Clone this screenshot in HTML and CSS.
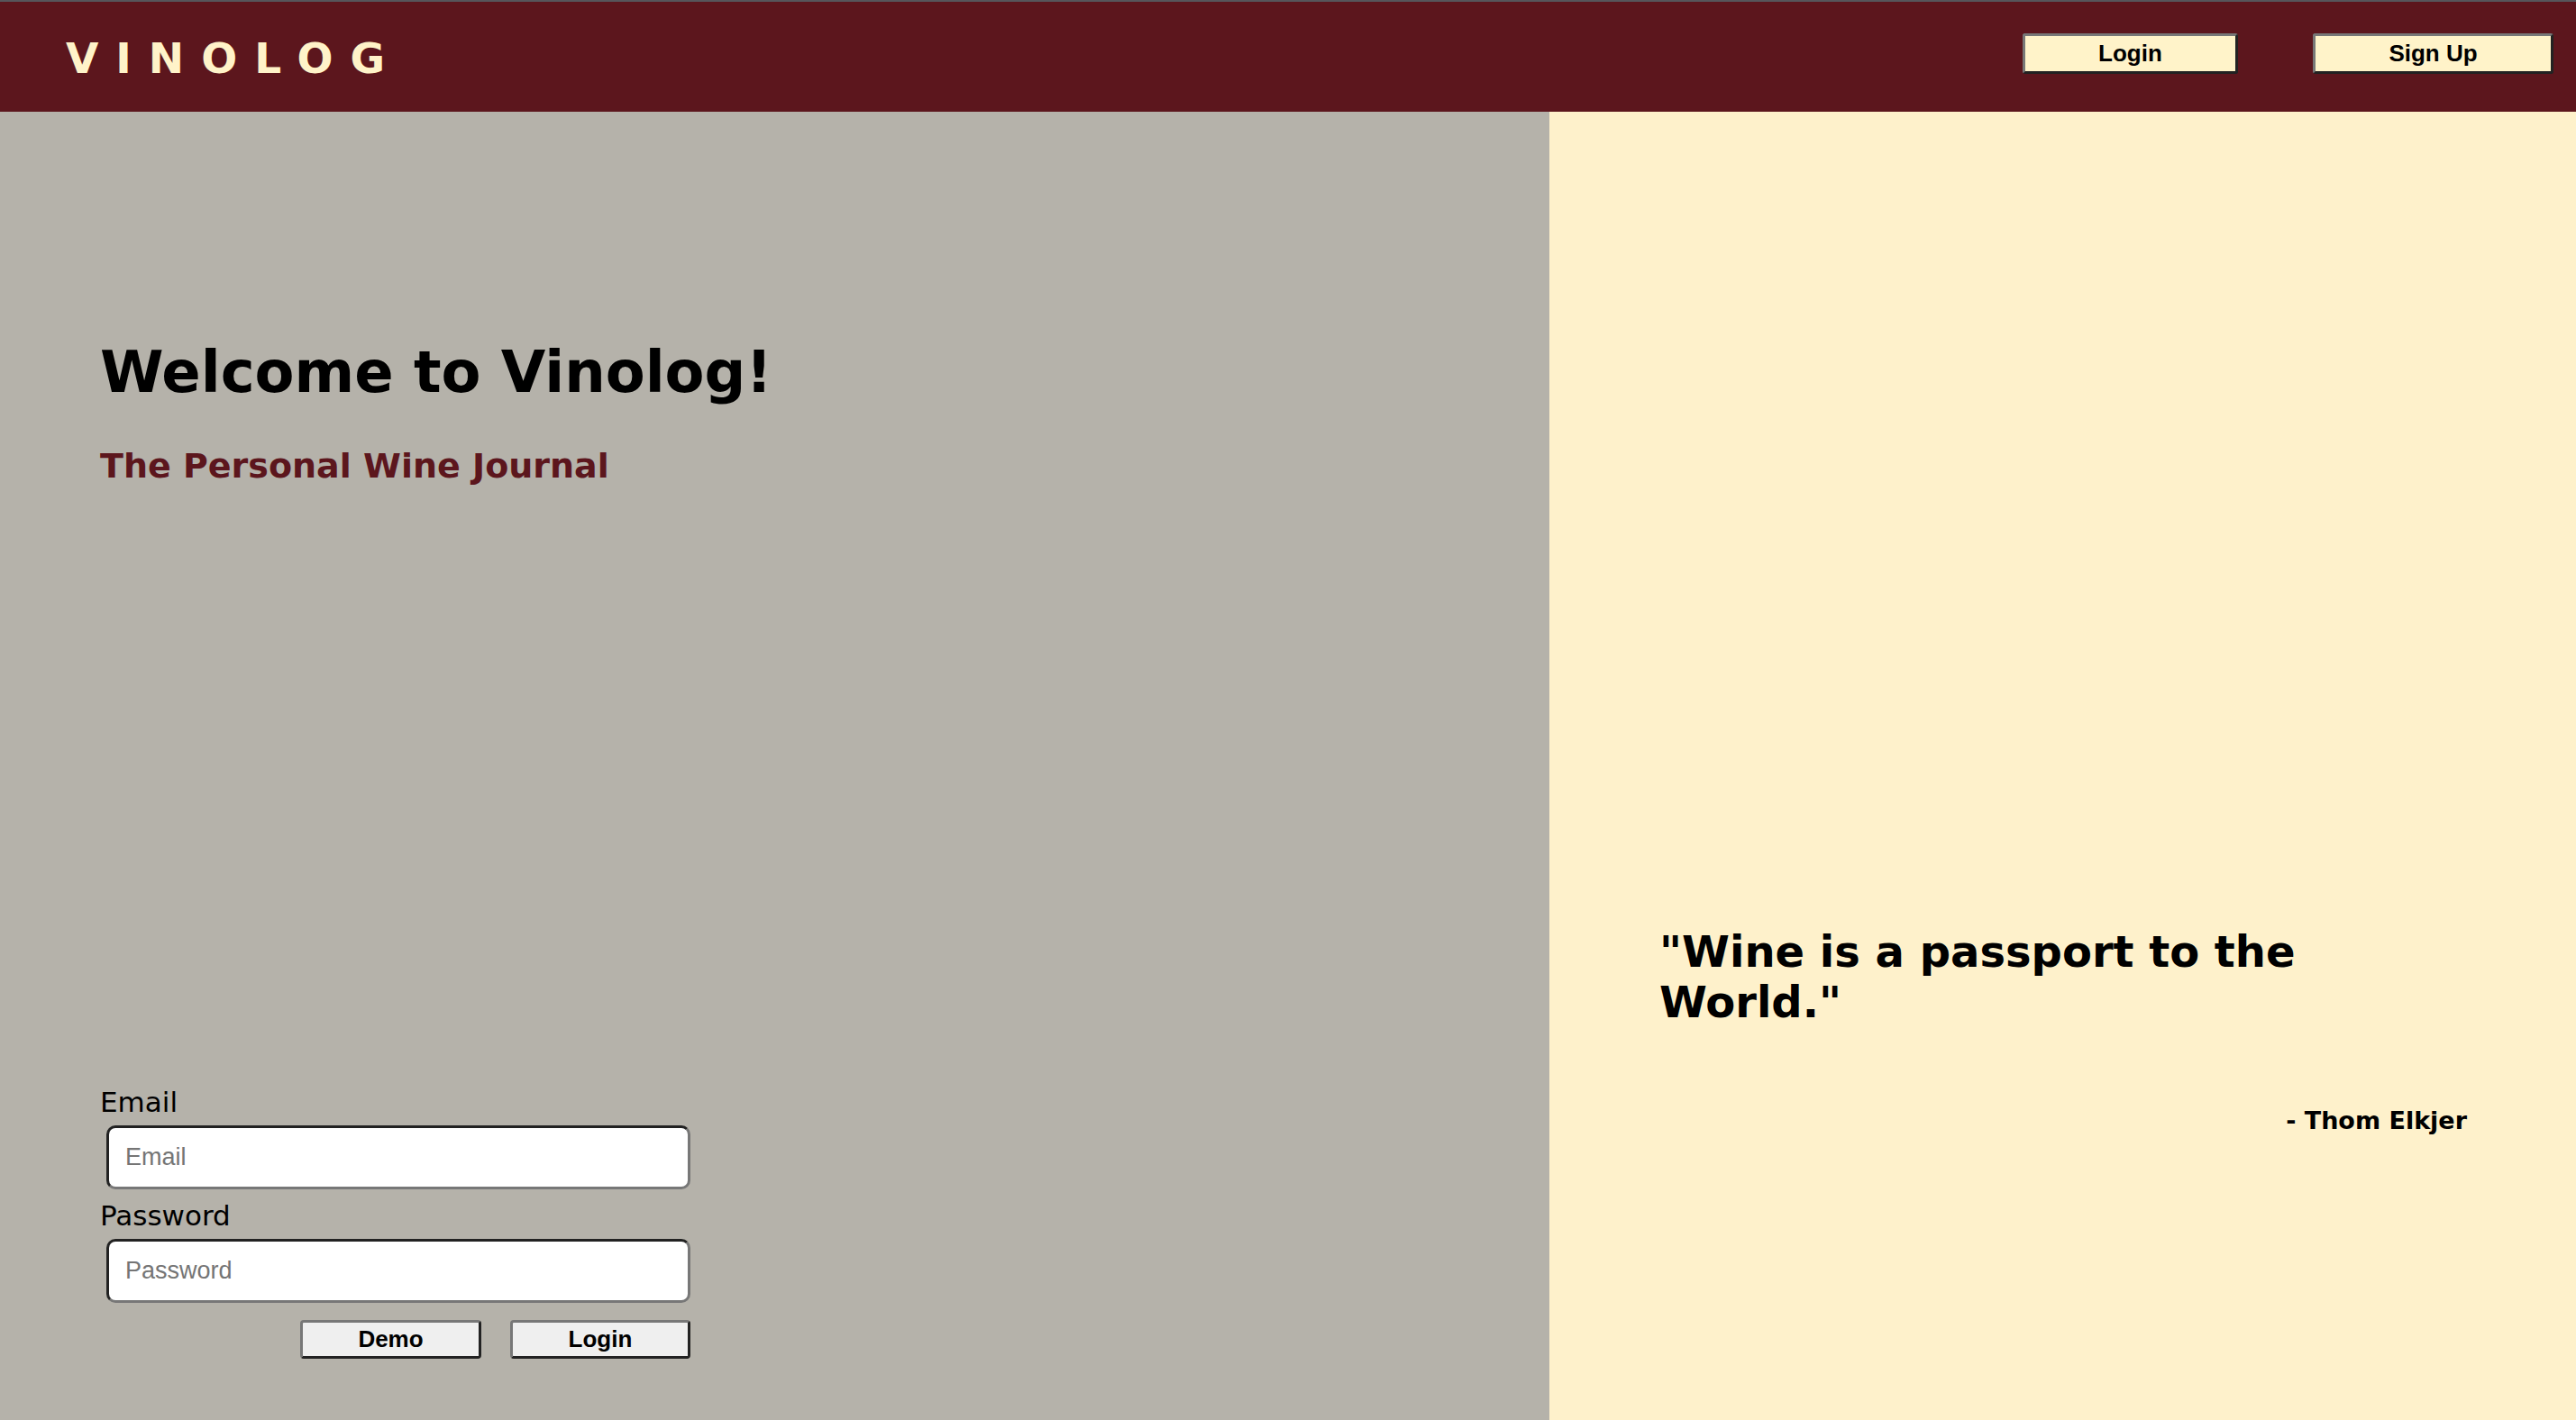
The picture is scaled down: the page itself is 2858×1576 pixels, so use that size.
FILE: index.html
```html
<!DOCTYPE html>
<html lang="en">
<head>
<meta charset="utf-8">
<title>Vinolog</title>
<link rel="stylesheet" href="styles.css">
</head>
<body>
<header class="topbar">
  <div class="logo">VINOLOG</div>
  <nav class="nav">
    <button class="nav-btn nav-login">Login</button>
    <button class="nav-btn nav-signup">Sign Up</button>
  </nav>
</header>
<main class="split">
  <section class="left">
    <div class="intro">
      <h1 class="title">Welcome to Vinolog!</h1>
      <h2 class="subtitle">The Personal Wine Journal</h2>
    </div>
    <form class="login-form">
      <label class="field-label" for="email">Email</label>
      <input class="field" id="email" type="text" placeholder="Email">
      <label class="field-label field-label-pw" for="password">Password</label>
      <input class="field" id="password" type="password" placeholder="Password">
      <div class="actions">
        <button type="button" class="form-btn form-demo">Demo</button>
        <button type="button" class="form-btn form-login">Login</button>
      </div>
    </form>
  </section>
  <section class="right">
    <blockquote class="quote">"Wine is a passport to the World."</blockquote>
    <p class="author">- Thom Elkjer</p>
  </section>
</main>
</body>
</html>
```

FILE: styles.css
```css
html, body {
  margin: 0;
  padding: 0;
}
body {
  height: 1576px;
  overflow: hidden;
  display: flex;
  flex-direction: column;
  font-family: "DejaVu Sans", Verdana, sans-serif;
  border-top: 2px solid #56565b;
  box-sizing: border-box;
}
.topbar {
  height: 122px;
  flex: none;
  background: #5c161d;
  display: flex;
  justify-content: space-between;
  align-items: flex-start;
  padding: 0 25px 0 73px;
}
.logo {
  color: #fff3c9;
  font-weight: bold;
  font-size: 47px;
  letter-spacing: 19px;
  line-height: 55px;
  margin-top: 35px;
}
.nav {
  display: flex;
  gap: 83px;
  margin-top: 35px;
}
.nav-btn {
  height: 45px;
  background: #fff3c9;
  border: 3px solid;
  border-color: #777777 #222222 #222222 #777777;
  border-radius: 3px;
  font-family: "Liberation Sans", Arial, sans-serif;
  font-weight: bold;
  font-size: 26px;
  color: #000;
  padding: 0;
}
.nav-login { width: 239px; }
.nav-signup { width: 267px; }
.split {
  flex: 1;
  display: grid;
  grid-template-columns: 1719px 1fr;
}
.left {
  background: #b5b2aa;
  display: flex;
  flex-direction: column;
  justify-content: space-between;
  padding: 252px 0 68px 111px;
}
.title {
  margin: 0;
  font-size: 64px;
  font-weight: bold;
  color: #000;
  line-height: normal;
}
.subtitle {
  margin: 45px 0 0;
  font-size: 38px;
  font-weight: bold;
  color: #5c161d;
  line-height: normal;
}
.login-form {
  display: flex;
  flex-direction: column;
  align-items: flex-start;
}
.field-label {
  font-size: 31px;
  color: #000;
  line-height: 36px;
}
.field-label-pw {
  margin-top: 11px;
}
.field {
  box-sizing: border-box;
  width: 648px;
  height: 71px;
  margin: 8px 0 0 7px;
  border: 3px solid;
  border-color: #222222 #777777 #777777 #222222;
  border-radius: 10px;
  background: #fff;
  padding: 0 18px;
  font-family: "Liberation Sans", Arial, sans-serif;
  font-size: 27px;
  color: #000;
  outline: none;
}
.field::placeholder {
  color: #757575;
}
.actions {
  width: 648px;
  margin: 19px 0 0 7px;
  display: flex;
  justify-content: flex-end;
  gap: 32px;
}
.form-btn {
  height: 43px;
  background: #efefef;
  border: 3px solid;
  border-color: #777777 #222222 #222222 #777777;
  border-radius: 4px;
  font-family: "Liberation Sans", Arial, sans-serif;
  font-weight: bold;
  font-size: 26px;
  color: #000;
  padding: 0;
}
.form-demo { width: 201px; }
.form-login { width: 200px; }
.right {
  background: #fef1cb;
  display: flex;
  flex-direction: column;
  justify-content: flex-end;
  padding: 0 121px 317px 122px;
}
.quote {
  margin: 0;
  font-size: 48px;
  font-weight: bold;
  color: #000;
  line-height: 56px;
}
.author {
  margin: 88px 0 0;
  text-align: right;
  font-size: 27px;
  font-weight: bold;
  color: #000;
  line-height: 31px;
}
```
